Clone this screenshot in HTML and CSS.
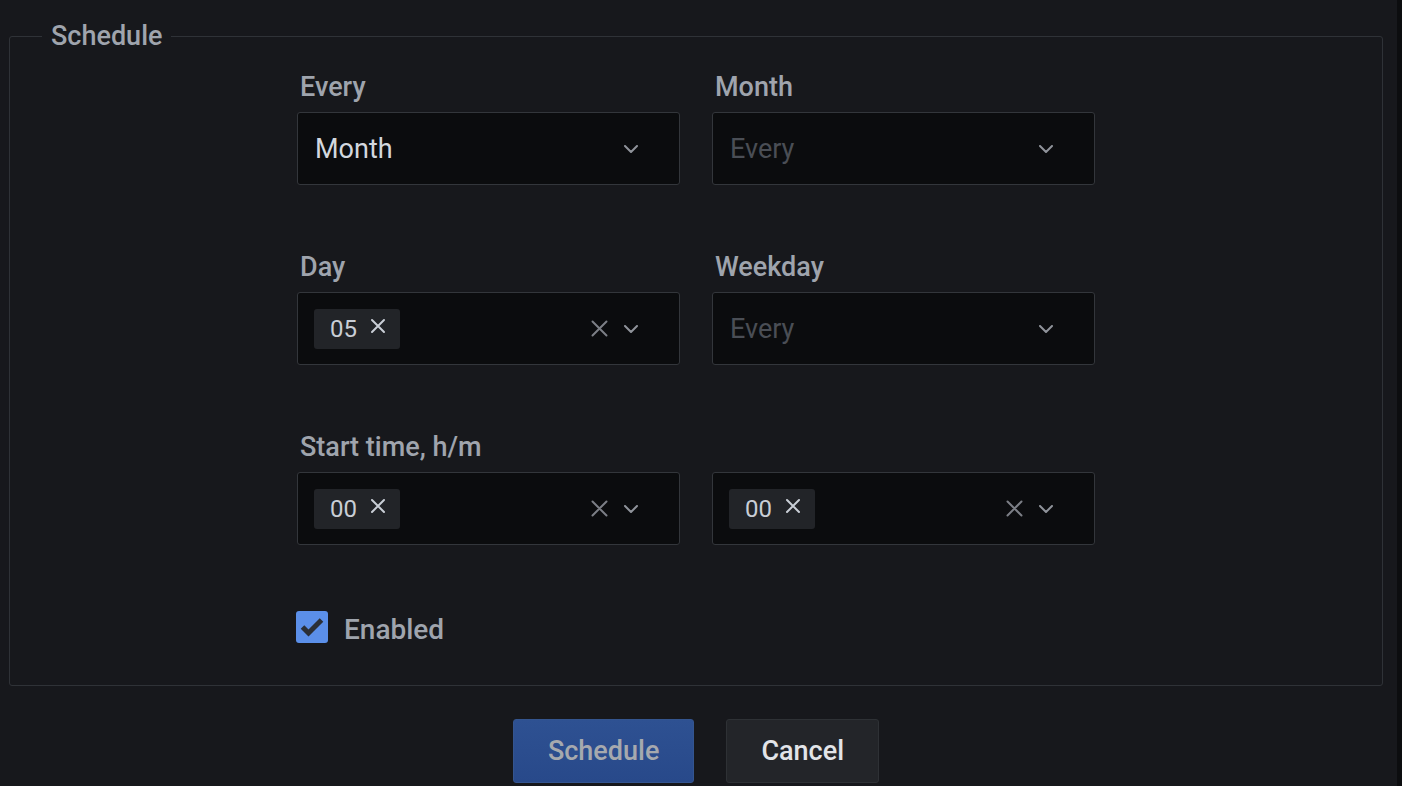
FILE: index.html
```html
<!DOCTYPE html>
<html lang="en">
<head>
<meta charset="utf-8">
<title>Schedule</title>
<link rel="stylesheet" href="styles.css">
</head>
<body>
<div class="page">
  <main class="main">
    <fieldset class="group">
      <legend class="group-title">Schedule</legend>
      <div class="grid">
        <div class="field">
          <label class="label">Every</label>
          <div class="select">
            <div class="value">Month</div>
            <div class="indicators">
              <svg class="chevron" width="14" height="8" viewBox="0 0 14 8"><polyline points="1,1 7,7 13,1" fill="none" stroke="currentColor" stroke-width="2" stroke-linecap="round" stroke-linejoin="round"/></svg>
            </div>
          </div>
        </div>
        <div class="field">
          <label class="label">Month</label>
          <div class="select">
            <div class="placeholder">Every</div>
            <div class="indicators">
              <svg class="chevron" width="14" height="8" viewBox="0 0 14 8"><polyline points="1,1 7,7 13,1" fill="none" stroke="currentColor" stroke-width="2" stroke-linecap="round" stroke-linejoin="round"/></svg>
            </div>
          </div>
        </div>
        <div class="field">
          <label class="label">Day</label>
          <div class="select select-multi">
            <div class="chip"><span class="chip-text">05</span>
              <svg class="chip-x" width="16" height="16" viewBox="0 0 16 16"><path d="M2 2 L14 14 M14 2 L2 14" stroke="currentColor" stroke-width="2" stroke-linecap="round"/></svg>
            </div>
            <div class="indicators">
              <svg class="clear" width="17" height="17" viewBox="0 0 17 17"><path d="M1.5 1.5 L15.5 15.5 M15.5 1.5 L1.5 15.5" stroke="currentColor" stroke-width="2" stroke-linecap="round"/></svg>
              <svg class="chevron" width="14" height="8" viewBox="0 0 14 8"><polyline points="1,1 7,7 13,1" fill="none" stroke="currentColor" stroke-width="2" stroke-linecap="round" stroke-linejoin="round"/></svg>
            </div>
          </div>
        </div>
        <div class="field">
          <label class="label">Weekday</label>
          <div class="select">
            <div class="placeholder">Every</div>
            <div class="indicators">
              <svg class="chevron" width="14" height="8" viewBox="0 0 14 8"><polyline points="1,1 7,7 13,1" fill="none" stroke="currentColor" stroke-width="2" stroke-linecap="round" stroke-linejoin="round"/></svg>
            </div>
          </div>
        </div>
        <div class="field">
          <label class="label">Start time, h/m</label>
          <div class="select select-multi">
            <div class="chip"><span class="chip-text">00</span>
              <svg class="chip-x" width="16" height="16" viewBox="0 0 16 16"><path d="M2 2 L14 14 M14 2 L2 14" stroke="currentColor" stroke-width="2" stroke-linecap="round"/></svg>
            </div>
            <div class="indicators">
              <svg class="clear" width="17" height="17" viewBox="0 0 17 17"><path d="M1.5 1.5 L15.5 15.5 M15.5 1.5 L1.5 15.5" stroke="currentColor" stroke-width="2" stroke-linecap="round"/></svg>
              <svg class="chevron" width="14" height="8" viewBox="0 0 14 8"><polyline points="1,1 7,7 13,1" fill="none" stroke="currentColor" stroke-width="2" stroke-linecap="round" stroke-linejoin="round"/></svg>
            </div>
          </div>
        </div>
        <div class="field">
          <div class="label label-empty">&nbsp;</div>
          <div class="select select-multi">
            <div class="chip"><span class="chip-text">00</span>
              <svg class="chip-x" width="16" height="16" viewBox="0 0 16 16"><path d="M2 2 L14 14 M14 2 L2 14" stroke="currentColor" stroke-width="2" stroke-linecap="round"/></svg>
            </div>
            <div class="indicators">
              <svg class="clear" width="17" height="17" viewBox="0 0 17 17"><path d="M1.5 1.5 L15.5 15.5 M15.5 1.5 L1.5 15.5" stroke="currentColor" stroke-width="2" stroke-linecap="round"/></svg>
              <svg class="chevron" width="14" height="8" viewBox="0 0 14 8"><polyline points="1,1 7,7 13,1" fill="none" stroke="currentColor" stroke-width="2" stroke-linecap="round" stroke-linejoin="round"/></svg>
            </div>
          </div>
        </div>
        <div class="check-row">
          <span class="checkbox">
            <svg width="32" height="32" viewBox="0 0 32 32"><polyline points="6.5,16 12.5,22 25.5,9" fill="none" stroke="#2b2f36" stroke-width="5"/></svg>
          </span>
          <span class="check-label">Enabled</span>
        </div>
      </div>
    </fieldset>
    <div class="actions">
      <button class="btn btn-primary" type="button">Schedule</button>
      <button class="btn btn-secondary" type="button">Cancel</button>
    </div>
  </main>
  <aside class="edge"></aside>
</div>
</body>
</html>
```
FILE: styles.css
```css
* { box-sizing: border-box; }
html, body {
  margin: 0;
  height: 100%;
  overflow: hidden;
}
body {
  background: #17181c;
  font-family: "Roboto", "Liberation Sans", sans-serif;
  color: #c7d0d9;
}
.page {
  display: flex;
  height: 786px;
}
.main {
  flex: 1;
  padding: 21px 14px 0 9px;
}
.edge {
  width: 5px;
  background: #0c0d0f;
}
.group {
  margin: 0;
  padding: 18px 0 42px;
  border: 1px solid #2f3237;
  border-radius: 3px;
  min-width: 0;
}
.group-title {
  margin-left: 32px;
  padding: 0 9px;
  font-size: 27px;
  line-height: 31px;
  font-weight: 500;
  color: #9fa4ad;
}
.grid {
  display: grid;
  grid-template-columns: 383px 383px;
  column-gap: 32px;
  row-gap: 65px;
  justify-content: center;
}
.field {
  display: flex;
  flex-direction: column;
}
.label {
  display: block;
  font-size: 27px;
  line-height: 33px;
  font-weight: 500;
  color: #9fa4ad;
  margin: 1px 0 8px 3px;
}
.select {
  height: 73px;
  background: #0b0c0e;
  border: 1px solid #33363b;
  border-radius: 3px;
  display: flex;
  align-items: center;
  padding: 0 41px 0 17px;
}
.value {
  flex: 1;
  font-size: 27px;
  color: #d3d8df;
}
.placeholder {
  flex: 1;
  font-size: 27px;
  color: #4a4e55;
}
.select-multi {
  padding-left: 16px;
}
.select-multi .chip {
  margin-right: auto;
}
.indicators {
  display: flex;
  align-items: center;
  gap: 16px;
}
.chevron {
  display: block;
  color: #8f939a;
}
.clear {
  display: block;
  color: #7c7f86;
}
.chip {
  display: flex;
  align-items: center;
  height: 40px;
  padding: 0 14px 0 16px;
  background: #222428;
  border-radius: 3px;
  gap: 13px;
}
.chip-text {
  font-size: 24px;
  color: #c9ced6;
  line-height: 40px;
}
.chip-x {
  display: block;
  color: #c9ced6;
  margin-top: -5px;
}
.check-row {
  grid-column: 1 / 3;
  display: flex;
  align-items: center;
  gap: 16px;
  height: 32px;
  margin-top: 1px;
  margin-left: -1px;
}
.checkbox {
  width: 32px;
  height: 32px;
  border-radius: 3px;
  background: #5b8fe9;
  display: block;
}
.checkbox svg { display: block; }
.check-label {
  font-size: 28px;
  line-height: 26px;
  font-weight: 500;
  color: #9fa4ad;
  padding-top: 6px;
}
.actions {
  display: flex;
  justify-content: center;
  gap: 32px;
  margin-top: 33px;
}
.btn {
  height: 64px;
  font-family: inherit;
  font-size: 27px;
  font-weight: 500;
  border-radius: 3px;
  cursor: pointer;
}
.btn-primary {
  padding: 0 34px;
  background: linear-gradient(#2e5192, #28498a);
  border: 1px solid #34558f;
  color: #a6a9ae;
}
.btn-secondary {
  padding: 0 34px;
  background: #232529;
  border: 1px solid #2e3135;
  color: #e2e4e8;
}
```
